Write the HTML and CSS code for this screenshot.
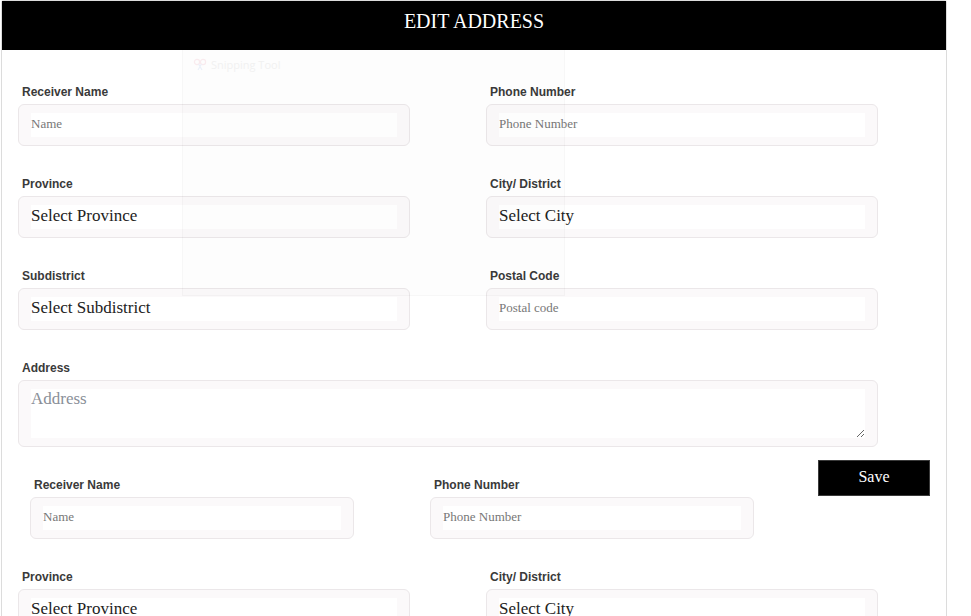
FILE: index.html
```html
<!DOCTYPE html>
<html lang="en">
<head>
<meta charset="utf-8">
<title>Edit Address</title>
<link rel="stylesheet" href="styles.css">
</head>
<body>
<div class="page">
  <div class="header">EDIT ADDRESS</div>
  <form class="form">
    <div class="grid">
      <div class="field">
        <label class="label">Receiver Name</label>
        <div class="box"><input class="input" type="text" placeholder="Name"></div>
      </div>
      <div class="field">
        <label class="label">Phone Number</label>
        <div class="box"><input class="input" type="text" placeholder="Phone Number"></div>
      </div>
      <div class="field">
        <label class="label">Province</label>
        <div class="box"><select class="select"><option>Select Province</option></select></div>
      </div>
      <div class="field">
        <label class="label">City/ District</label>
        <div class="box"><select class="select"><option>Select City</option></select></div>
      </div>
      <div class="field">
        <label class="label">Subdistrict</label>
        <div class="box"><select class="select"><option>Select Subdistrict</option></select></div>
      </div>
      <div class="field">
        <label class="label">Postal Code</label>
        <div class="box"><input class="input" type="text" placeholder="Postal code"></div>
      </div>
      <div class="field wide">
        <label class="label">Address</label>
        <div class="box"><textarea class="textarea" placeholder="Address"></textarea></div>
      </div>
    </div>

    <div class="second">
      <div class="grid small">
        <div class="field">
          <label class="label">Receiver Name</label>
          <div class="box"><input class="input" type="text" placeholder="Name"></div>
        </div>
        <div class="field">
          <label class="label">Phone Number</label>
          <div class="box"><input class="input" type="text" placeholder="Phone Number"></div>
        </div>
      </div>
      <button class="save" type="button">Save</button>
    </div>

    <div class="grid lower">
      <div class="field">
        <label class="label">Province</label>
        <div class="box"><select class="select"><option>Select Province</option></select></div>
      </div>
      <div class="field">
        <label class="label">City/ District</label>
        <div class="box"><select class="select"><option>Select City</option></select></div>
      </div>
    </div>
  </form>
</div>

<div class="ghost">
  <div class="ghost-title">
    <svg width="14" height="14" viewBox="0 0 14 14" aria-hidden="true">
      <circle cx="4" cy="4" r="2.6" fill="none" stroke="#f9ebee" stroke-width="1.2"/>
      <circle cx="10" cy="4" r="2.6" fill="none" stroke="#f9ebee" stroke-width="1.2"/>
      <path d="M5.5 6 L9 12 M8.5 6 L5 12" stroke="#ebf0f9" stroke-width="1.2" fill="none"/>
    </svg>
    <span>Snipping Tool</span>
  </div>
</div>
</body>
</html>
```

FILE: styles.css
```css
html, body {
  margin: 0;
  padding: 0;
  background: #ffffff;
}

body {
  position: relative;
  font-family: "Liberation Serif", "Times New Roman", serif;
}

.page {
  box-sizing: border-box;
  width: 946px;
  margin-left: 1px;
  border: 1px solid #dcdcdc;
  border-bottom: none;
  border-radius: 3px 3px 0 0;
  min-height: 640px;
}

.header {
  height: 49px;
  box-sizing: border-box;
  padding-top: 8px;
  background: #000000;
  color: #ffffff;
  text-align: center;
  font-family: "Liberation Serif", "Times New Roman", serif;
  font-size: 20px;
  line-height: 24px;
}

.form {
  padding: 35px 0 0 16px;
  margin: 0;
}

.grid {
  display: grid;
  grid-template-columns: 392px 392px;
  column-gap: 76px;
  row-gap: 31px;
}

.wide {
  grid-column: 1 / 3;
}

.label {
  display: block;
  margin: 0 0 5px 4px;
  font-family: "Liberation Sans", Arial, sans-serif;
  font-weight: bold;
  font-size: 12px;
  line-height: 14px;
  color: #3a3a3a;
}

.box {
  box-sizing: border-box;
  border: 1px solid #ebe7e9;
  border-radius: 6px;
  background: #fbf9fa;
  padding: 8px 12px;
}

.input,
.select {
  display: block;
  box-sizing: border-box;
  width: 100%;
  height: 24px;
  margin: 0;
  border: none;
  outline: none;
  background: #ffffff;
  font-family: "Liberation Serif", "Times New Roman", serif;
}

.input {
  padding: 0 0 2px 0;
  font-size: 13px;
  color: #333333;
}

.input::placeholder {
  color: #777777;
}

.select {
  -webkit-appearance: none;
  appearance: none;
  padding: 0 0 3px 0;
  font-size: 17px;
  color: #222222;
}

.textarea {
  display: block;
  box-sizing: border-box;
  width: 100%;
  height: 49px;
  margin: 0;
  padding: 0;
  border: none;
  outline: none;
  background: #ffffff;
  font-family: "Liberation Serif", "Times New Roman", serif;
  font-size: 17px;
  color: #333333;
}

.textarea::placeholder {
  color: #8a8f98;
}

.second {
  display: flex;
  justify-content: space-between;
  align-items: flex-start;
  margin-top: 13px;
  padding-right: 16px;
}

.small {
  grid-template-columns: 324px 324px;
  padding: 18px 0 0 12px;
}

.save {
  box-sizing: border-box;
  width: 112px;
  height: 36px;
  margin: 0;
  padding: 0 0 3px 0;
  border: 1px solid #3a3a3a;
  background: #000000;
  color: #ffffff;
  font-family: "Liberation Serif", "Times New Roman", serif;
  font-size: 16px;
  cursor: pointer;
}

.lower {
  margin-top: 31px;
}

.ghost {
  position: absolute;
  left: 182px;
  top: 50px;
  width: 383px;
  height: 246px;
  box-sizing: border-box;
  border: 1px solid rgba(0, 0, 0, 0.025);
  border-top: none;
  background: rgba(0, 0, 0, 0.006);
  pointer-events: none;
}

.ghost-title {
  display: flex;
  align-items: center;
  gap: 4px;
  padding: 7px 0 0 10px;
  font-family: "Open Sans", "Noto Sans", sans-serif;
  font-size: 11px;
  color: #f1f1f1;
}
```
